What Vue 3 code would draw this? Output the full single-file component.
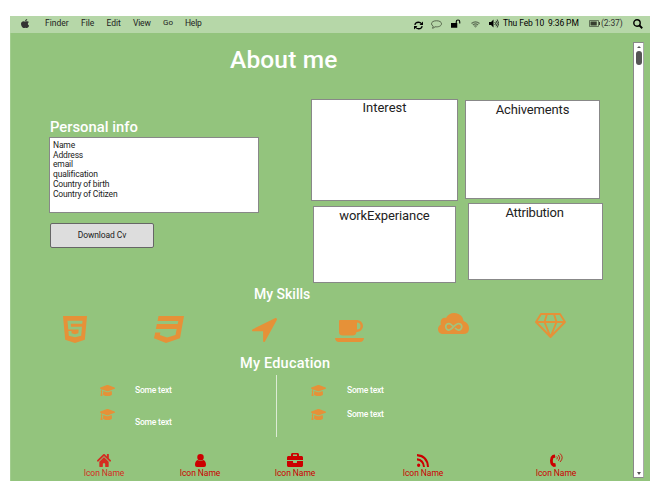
<script setup>
const menus = ['Finder', 'File', 'Edit', 'View', 'Go', 'Help']
const info = ['Name', 'Address', 'email', 'qualification', 'Country of birth', 'Country of Citizen']

const skills = [
  { name: 'html5', box: '0 32 384 448', d: 'M0 32l34.9 395.8L191.5 480l157.6-52.2L384 32H0zm308.2 127.9H124.4l4.1 49.4h175.6l-13.6 148.4-97.9 27v.3h-1.1l-98.7-27.3-6-75.8h47.7L138 320l53.5 14.5 53.7-14.5 6-62.2H84.3L71.5 112.2h241.1l-4.4 47.7z' },
  { name: 'css3', box: '0 32 480 448', d: 'M480 32l-64 368-223.3 80L0 400l19.6-94.8h82l-8 40.6L210 390.2l134.1-44.4 18.8-97.1H29.5l16-82h333.7l10.5-52.7H56.3l16.3-82H480z' },
  { name: 'arrow', box: '0 0 512 512', d: 'M470 5L15 240c-24 13-18 45 8 45h204v204c0 27 29 32 41 8L508 42c12-25-13-50-38-37z' },
  { name: 'coffee', box: '0 0 60 44', d: 'M8 2q0-2 2-2h34a12 12 0 0 1 0 24h-1q-1 7-8 7H16q-8 0-8-7zM44 5v14a7 7 0 0 0 0-14zM0 36h58q-1 8-8 8H8q-7 0-8-8z' },
]

const cap = 'M622.34 153.2L343.4 67.5c-15.2-4.67-31.6-4.67-46.79 0L17.66 153.2c-23.54 7.23-23.54 38.36 0 45.59l48.63 14.94c-10.67 13.19-17.23 29.28-17.88 46.9C38.78 266.15 32 276.11 32 288c0 10.78 5.68 19.85 13.86 25.65L20.33 428.53C18.11 438.52 25.71 448 35.94 448h56.11c10.24 0 17.84-9.48 15.62-19.47L82.14 313.65C90.32 307.85 96 298.78 96 288c0-11.57-6.47-21.25-15.66-26.87.76-15.02 8.44-28.3 20.69-36.72L296.6 284.5c9.06 2.78 26.44 6.25 46.79 0l278.95-85.7c23.55-7.24 23.55-38.36 0-45.6zM352.79 315.09c-28.53 8.76-52.84 3.92-65.59 0l-145.02-44.55L128 384c0 35.35 85.96 64 192 64s192-28.65 192-64l-14.18-113.47-145.03 44.56z'

const links = [
  { name: 'home', box: '0 32 576 448', d: 'M280.37 148.26L96 300.11V464a16 16 0 0 0 16 16l112.06-.29a16 16 0 0 0 15.92-16V368a16 16 0 0 1 16-16h64a16 16 0 0 1 16 16v95.64a16 16 0 0 0 16 16.05L464 480a16 16 0 0 0 16-16V300L295.67 148.26a12.19 12.19 0 0 0-15.3 0zM571.6 251.47L488 182.56V44.05a12 12 0 0 0-12-12h-56a12 12 0 0 0-12 12v72.61L318.47 43a48 48 0 0 0-61 0L4.34 251.47a12 12 0 0 0-1.6 16.9l25.5 31A12 12 0 0 0 45.15 301l235.22-193.74a12.19 12.19 0 0 1 15.3 0L530.9 301a12 12 0 0 0 16.9-1.6l25.5-31a12 12 0 0 0-1.7-16.93z' },
  { name: 'user', box: '0 0 22 26', d: 'M11 0a6.300 6.300 0 0 1 0 13a6.300 6.300 0 0 1 0-13zM5.500 12q5.500 4 11 0C21 13 22 18 22 22q0 4-4 4H4q-4 0-4-4C0 18 1 13 5.500 12z' },
  { name: 'briefcase', box: '0 32 512 448', d: 'M320 336c0 8.84-7.16 16-16 16h-96c-8.84 0-16-7.16-16-16v-48H0v144c0 25.6 22.4 48 48 48h416c25.6 0 48-22.4 48-48V288H320v48zm144-208h-80V80c0-25.6-22.4-48-48-48H176c-25.6 0-48 22.4-48 48v48H48c-25.6 0-48 22.4-48 48v80h512v-80c0-25.6-22.4-48-48-48zm-144 0H192V80h128v48z' },
  { name: 'rss', box: '0 0 24 24', d: 'M3.300 17.400a3.300 3.300 0 1 1 0 6.600a3.300 3.300 0 0 1 0-6.600zM0 8V12q11 1 12 12h4Q14.500 9.500 0 8zM0 0v4Q19 5 20 24H24Q22.500 1.500 0 0z' },
  { name: 'phone', box: '0 0 24 28', d: 'M4.500 4L9 3l1 6-4 1.500q-1.500 4.500 0 9.500l4 .5L11 27l-4 1Q0 25 0 15Q0 7 4.500 4z' },
]
</script>

<template>
  <div class="desktop">
    <header class="menubar">
      <svg class="apple" viewBox="4 32 367 448" preserveAspectRatio="none"><path d="M318.7 268.7c-.2-36.7 16.4-64.4 50-84.8-18.8-26.9-47.2-41.7-84.7-44.6-35.5-2.8-74.3 20.7-88.5 20.7-15 0-49.4-19.7-76.4-19.7C63.3 141.2 4 184.8 4 273.5q0 39.3 14.4 81.2c12.8 36.7 59 126.7 107.2 125.2 25.2-.6 43-17.9 75.8-17.9 31.8 0 48.3 17.9 76.4 17.9 48.6-.7 90.4-82.5 102.6-119.3-65.2-30.7-61.7-90-61.7-91.9zm-56.6-164.2c27.3-32.4 24.8-61.9 24-72.5-24.1 1.4-52 16.4-67.9 34.9-17.5 19.8-27.8 44.3-25.6 71.9 26.1 2 49.9-11.4 69.5-34.3z" /></svg>
      <nav class="menus">
        <span v-for="m in menus" :key="m" :class="m.toLowerCase()">{{ m }}</span>
      </nav>
      <div class="status">
        <svg class="sync" viewBox="0 0 18 18" fill="none" stroke="#000" stroke-width="2.600"><path d="M2 8Q2 2.500 9 2.500q4 0 6 3M16 10Q16 15.500 9 15.500q-4 0-6-3" /><path d="M18 1v7H11zM0 17V10h7z" fill="#000" stroke="none" /></svg>
        <svg class="bubble" viewBox="0 0 22 17" fill="none" stroke="#48543f" stroke-width="1.700"><path d="M11 1C5 1 1 3.500 1 7q0 3 3.500 5L3 16q3-.5 5-3c7 1 13-1.500 13-6 0-3.500-4-6-10-6z" /></svg>
        <svg class="unlock" viewBox="0 0 20 17"><path d="M0 7.500h12.500V17H0z" /><path d="M10.500 8V5q0-3.500 3.500-3.500T17.500 5v3.500" fill="none" stroke="#000" stroke-width="2.200" /></svg>
        <svg class="wifi" viewBox="0 0 18 13" fill="none" stroke="#5b6c53" stroke-width="2.400"><path d="M1 4.500q8-6.500 16 0M3.800 7.300q5.200-4 10.400 0M6.500 10q2.500-2 5 0" /><path d="M7 10.500h4l-2 2.500z" fill="#66785d" stroke="none" /></svg>
        <svg class="volume" viewBox="0 0 20 18"><path d="M0 6h4l5-5v16l-5-5H0z" /><path d="M11.500 6q3 3 0 6M14 3.500q5 5.500 0 11M16.500 1q6 8 0 16" fill="none" stroke="#000" stroke-width="1.500" /></svg>
        <span class="date">Thu Feb 10&nbsp; 9:36 PM</span>
        <svg class="battery" viewBox="0 0 22 14"><path d="M1 1h18v12H1z" fill="none" stroke="#4d5a45" stroke-width="1.600" /><path d="M3 3h12.500v8H3zM20 4h2v6h-2z" fill="#37402f" /></svg>
        <span class="remaining">(2:37)</span>
        <svg class="search" viewBox="0 0 20 20" fill="none" stroke="#000"><circle cx="8" cy="8" r="6.400" stroke-width="2.800" /><path d="M12.500 12.500l6 6" stroke-width="3.600" /></svg>
      </div>
    </header>

    <div class="body">
      <main>
        <h1>About me</h1>

        <section class="overview">
          <div class="personal">
            <h2>Personal info</h2>
            <div class="info">
              <p v-for="line in info" :key="line">{{ line }}</p>
            </div>
            <button>Download Cv</button>
          </div>
          <div class="cards first">
            <article class="interest">Interest</article>
            <article class="work">workExperiance</article>
          </div>
          <div class="cards second">
            <article class="achieve">Achivements</article>
            <article class="attribution">Attribution</article>
          </div>
        </section>

        <h3 class="skills-title">My Skills</h3>
        <section class="skills">
          <svg v-for="s in skills" :key="s.name" :class="s.name" :viewBox="s.box" preserveAspectRatio="none"><path :d="s.d" fill-rule="evenodd" /></svg>
          <svg class="cloud" viewBox="0 0 62 42"><path d="M11 42C4 42 0 38 0 32q0-6 6-9C3 15 9 8 16 10 21 0 32-2 41 2q9 4 10 14 11 4 11 15 0 11-12 11z" /><path d="M31 28C27 23 25 21 22 21a6.500 6.500 0 0 0 0 13c6 0 12-13 19-13a6.500 6.500 0 0 1 0 13c-3 0-5-2-7-4" fill="none" stroke="#a3c27c" stroke-width="3.500" /></svg>
          <svg class="diamond" viewBox="0 0 62 50" fill="none" stroke="#e69138" stroke-width="3.800" stroke-linejoin="round"><path d="M12 2h38l10 16-29 30L2 18zM2 18h58M24 2l-5 16 12 30 12-30-5-16" /></svg>
        </section>

        <h3 class="education-title">My Education</h3>
        <section class="education">
          <div class="degrees left">
            <div v-for="n in 2" :key="n" class="degree">
              <svg viewBox="0 64 640 384" preserveAspectRatio="none"><path :d="cap" /></svg>
              <span>Some text</span>
            </div>
          </div>
          <div class="degrees right">
            <div v-for="n in 2" :key="n" class="degree">
              <svg viewBox="0 64 640 384" preserveAspectRatio="none"><path :d="cap" /></svg>
              <span>Some text</span>
            </div>
          </div>
        </section>

        <footer>
          <div v-for="l in links" :key="l.name" class="link" :class="l.name">
            <svg :viewBox="l.box" preserveAspectRatio="none">
              <path :d="l.d" />
              <path v-if="l.name === 'phone'" d="M12.500 7q2.500 2.500 0 5.500M15.500 4q5 6 0 11.500M18.500 1q8 8 0 17" fill="none" stroke="#cc0000" stroke-width="1.600" />
            </svg>
            <span>Icon Name</span>
          </div>
        </footer>
      </main>

      <aside class="scrollbar">
        <i class="up"></i>
        <i class="thumb"></i>
        <i class="down"></i>
      </aside>
    </div>
  </div>
</template>

<style>
body { background: #fff; }
</style>

<style scoped>
* { box-sizing: border-box; }
.desktop {
  width: 640px;
  height: 465px;
  margin: 16px 0 0 10px;
  background: #93c47d;
  font-family: Roboto, "Liberation Sans", sans-serif;
  font-size: 8.5px;
  color: #222;
  white-space: nowrap;
}
svg { display: block; flex: none; }
.menubar {
  height: 17px;
  padding: 0 7px 3px 11px;
  display: flex;
  align-items: center;
  background: #b6d7a8;
}
.apple { width: 8px; height: 9px; fill: #333; }
.menus { display: flex; align-items: center; margin-left: 16px; line-height: 14px; }
.menus .finder { width: 36px; }
.menus .file { width: 25.5px; }
.menus .edit { width: 26.5px; }
.menus .view { width: 30px; letter-spacing: -0.2px; }
.menus .go { width: 22px; font-size: 8px; }
.menus .help { letter-spacing: -0.2px; }
.status { display: flex; align-items: center; margin-left: auto; color: #000; line-height: 14px; }
.sync { width: 9px; height: 9px; margin: 4px 8px 0 0; }
.bubble { width: 11px; height: 9px; margin: 2px 9px 0 0; }
.unlock { width: 10px; height: 9px; margin-right: 10px; }
.wifi { width: 9px; height: 7px; margin: 2px 9px 0 0; }
.volume { width: 10px; height: 9px; margin: 1px 4px 0 0; }
.date { width: 86px; letter-spacing: -0.1px; }
.battery { width: 11px; height: 7px; margin: 1px 1px 0 0; }
.remaining { width: 32px; color: #333; letter-spacing: -0.1px; }
.search { width: 10px; height: 10px; margin-top: 1px; }

.body { height: 448px; display: flex; border-left: 1px solid #a2cd8f; }
main { width: 622px; }
h1, h2, h3, p { margin: 0; }
h1, h2, h3 { color: #fff; font-weight: 500; }
h1 { margin-left: 219px; height: 66px; padding-top: 13px; font-size: 24.5px; line-height: 28px; letter-spacing: 0.15px; }
.overview { display: flex; height: 185px; }
.personal { width: 300px; padding: 19px 0 0 38px; }
h2 { height: 19px; padding-left: 1px; font-size: 14.8px; line-height: 19px; }
.info {
  width: 210px;
  height: 76px;
  padding: 3px;
  background: #fff;
  border: 1px solid #888;
  line-height: 9.7px;
  letter-spacing: -0.16px;
}
button {
  display: block;
  width: 104px;
  height: 25px;
  margin: 10px 0 0 1px;
  padding: 0 0 2px;
  border: 1px solid #666;
  border-radius: 2px;
  background: #ddd;
  color: #222;
  font: inherit;
  letter-spacing: -0.1px;
}
.cards { display: flex; flex-direction: column; }
.second { margin-left: 7px; padding-top: 1px; }
article {
  background: #fff;
  border: 1px solid #888;
  text-align: center;
  font-size: 13px;
  line-height: 16px;
}
.interest { width: 147px; height: 102px; }
.work { width: 143px; height: 77px; margin: 5px 0 0 2px; line-height: 18px; letter-spacing: -0.1px; }
.achieve { width: 135px; height: 99px; line-height: 17px; letter-spacing: -0.15px; }
.attribution { width: 135px; height: 77px; margin: 4px 0 0 3px; padding-right: 2px; line-height: 17px; letter-spacing: -0.25px; }

h3 { font-size: 14px; line-height: 18px; }
.skills-title { margin: 1px 0 0 243px; height: 28px; }
.skills { height: 42px; display: flex; align-items: flex-start; fill: #e69138; }
.html5 { width: 24px; height: 27px; margin: 3px 0 0 52px; }
.css3 { width: 30px; height: 27px; margin: 3px 0 0 67px; }
.arrow { width: 25px; height: 24px; margin: 5px 0 0 68px; }
.coffee { width: 30px; height: 22px; margin: 7px 0 0 58px; }
.cloud { width: 31px; height: 21px; margin-left: 73px; }
.diamond { width: 31px; height: 25px; margin-left: 66px; }
.education-title { margin-left: 229px; height: 20px; font-size: 14.5px; letter-spacing: 0.2px; }

.education { display: flex; height: 62px; }
.degrees { display: grid; grid-template-rows: 24px 24px; padding-top: 10px; align-content: start; }
.left { width: 266px; padding-left: 89px; border-right: 1px solid #dcebd5; }
.right { padding-left: 34px; }
.degree { display: flex; align-items: flex-start; color: #fff; font-weight: 500; line-height: 10px; letter-spacing: -0.2px; }
.degree svg { width: 15px; height: 11px; fill: #e69138; }
.degree span { margin-left: 20px; }
.right .degree span { margin-left: 21px; }
.left .degree:nth-child(2) span { padding-top: 8px; }

footer { display: flex; padding-top: 16px; color: #cc0000; fill: #cc0000; }
.link { display: flex; flex-direction: column; align-items: center; width: 50px; line-height: 10px; }
.link span { margin-top: 1px; letter-spacing: -0.05px; }
.link svg { width: 12px; height: 13px; margin-top: 1px; }
.link.home { margin-left: 68px; color: #d42b21; fill: #d42b21; }
.link.home svg { width: 14px; }
.link.user { margin-left: 46px; }
.link.user svg { width: 11px; }
.link.briefcase { margin-left: 45px; }
.link.briefcase svg { width: 16px; height: 14px; margin-top: 0; }
.link.rss { margin-left: 78px; }
.link.phone { margin-left: 83px; }
.link.phone svg { width: 13px; height: 14px; margin-top: 0; }

.scrollbar {
  width: 11px;
  height: 436px;
  margin-top: 9px;
  padding-top: 3px;
  display: flex;
  flex-direction: column;
  align-items: center;
  background: #fff;
  border: 1px solid #888;
  border-right-color: #aaa;
}
.up, .down { border: 2.5px solid transparent; }
.up { border-top: 0; border-bottom: 2px solid #555; }
.thumb { width: 6px; height: 14px; margin-top: 3px; border-radius: 3px; background: #555; }
.down { margin: auto 0 2px; border-bottom: 0; border-top: 3px solid #555; }
</style>
